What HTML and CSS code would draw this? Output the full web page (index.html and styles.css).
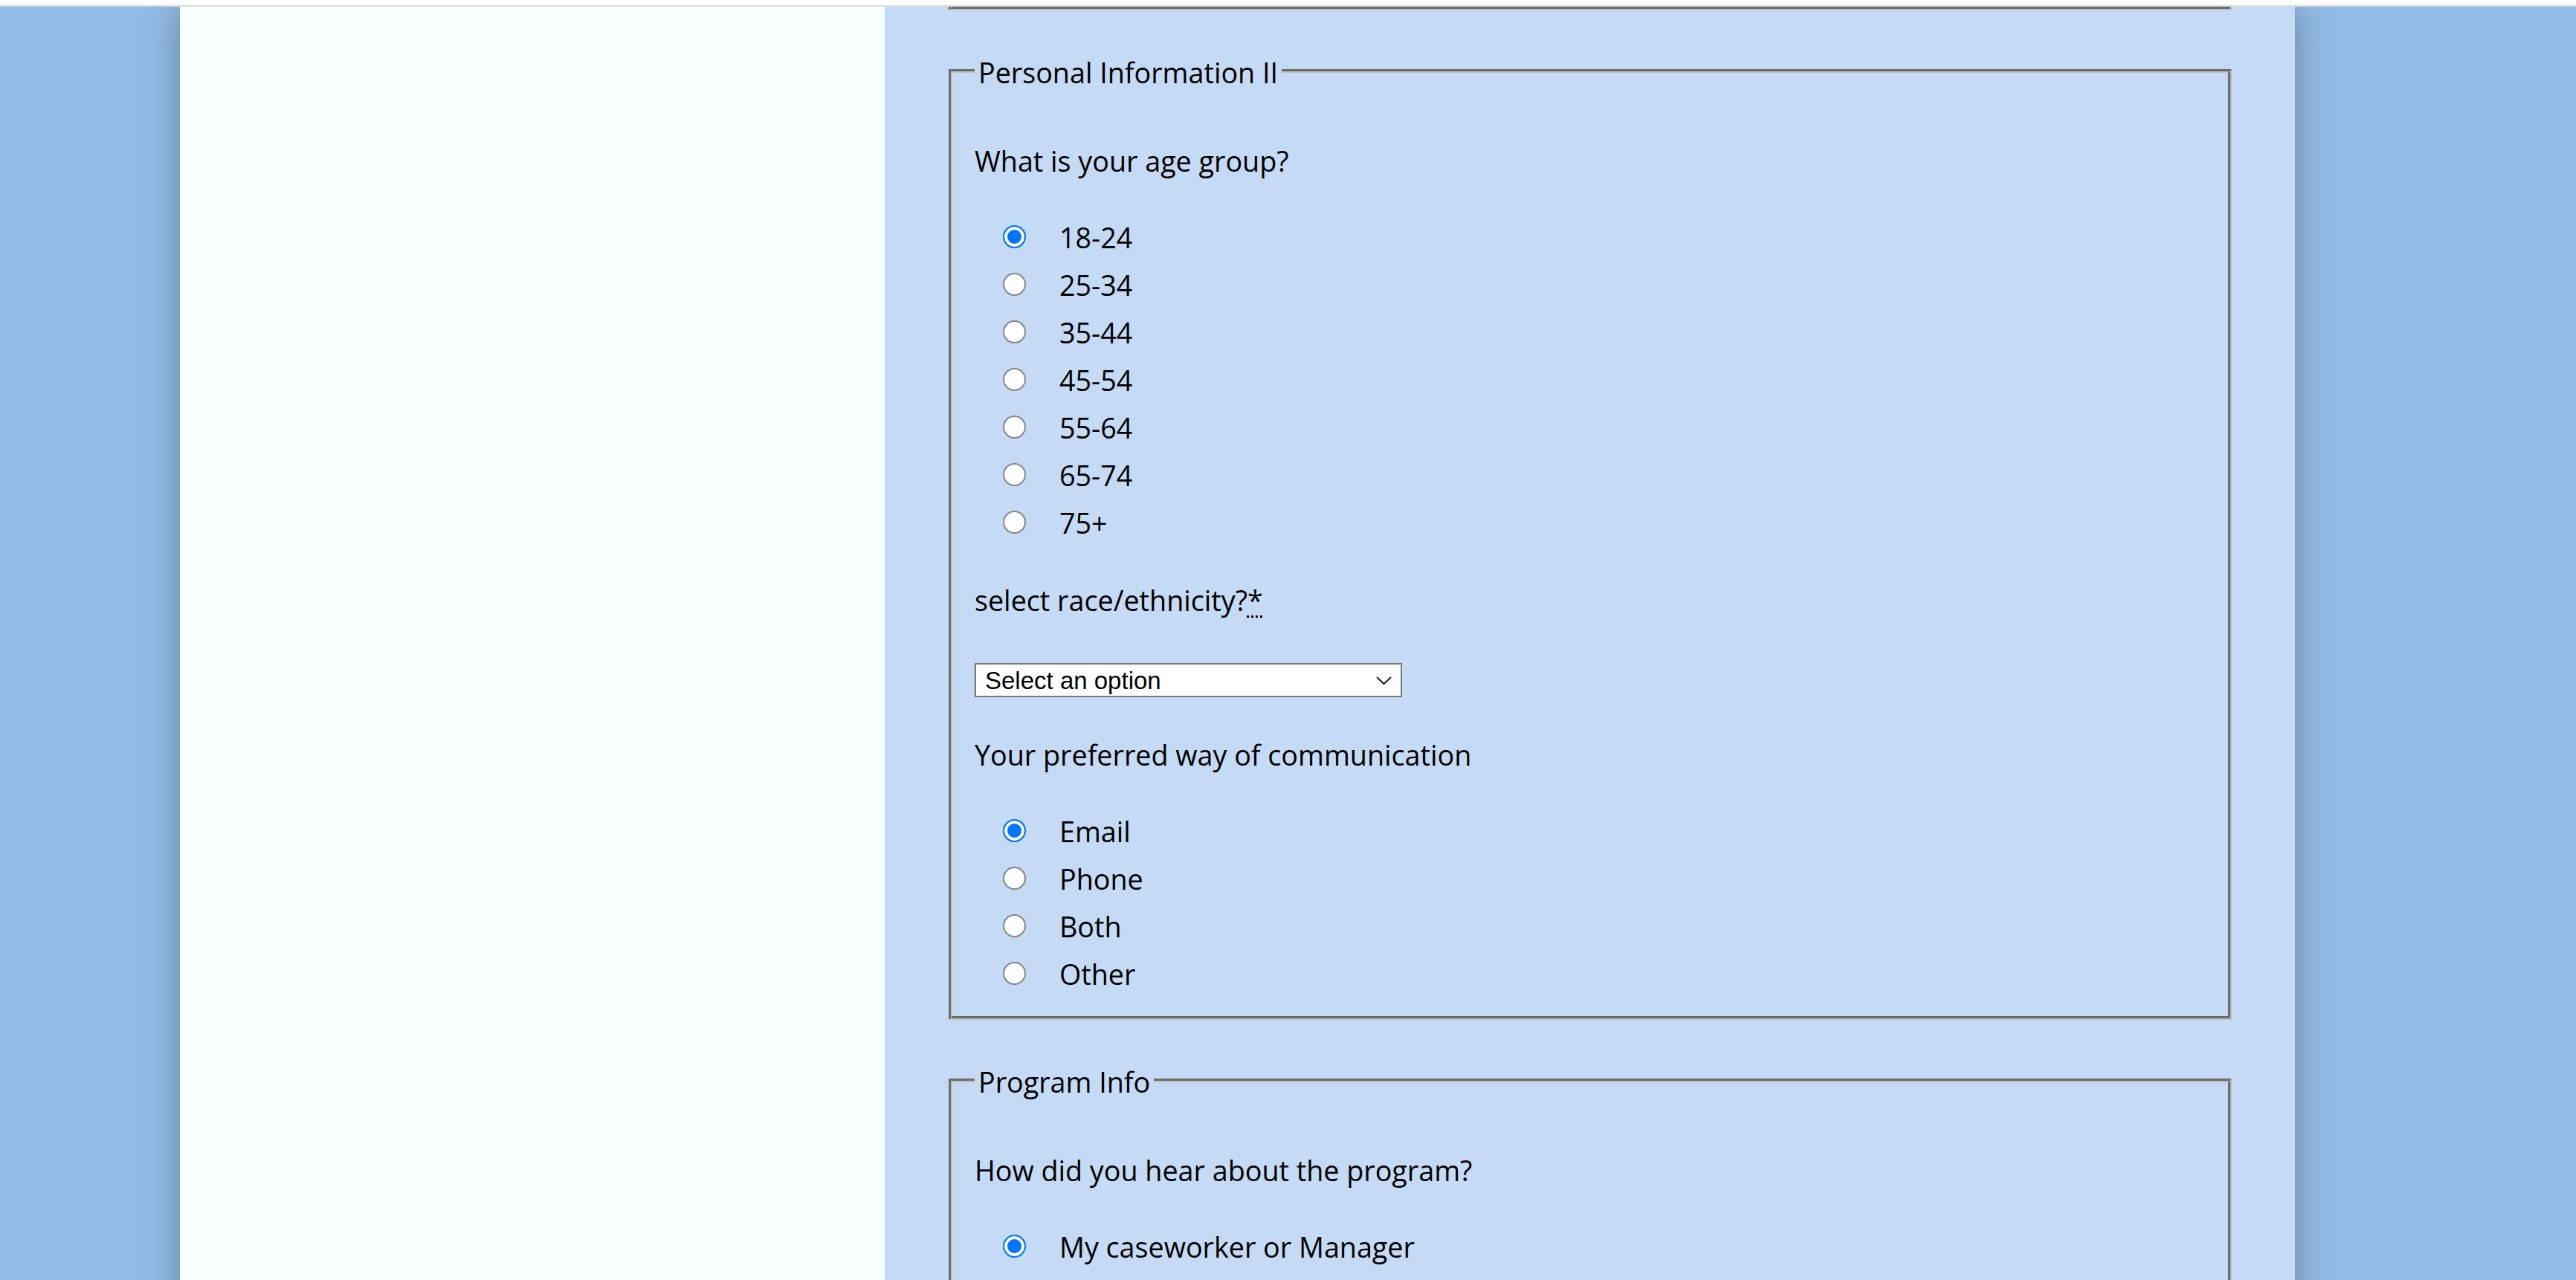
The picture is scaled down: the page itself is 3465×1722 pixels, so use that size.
FILE: index.html
```html
<!DOCTYPE html>
<html lang="en">
<head>
<meta charset="utf-8">
<title>Application Form</title>
<link rel="stylesheet" href="styles.css">
</head>
<body>
<div class="topbar"></div>
<div class="page">
  <aside class="side"></aside>
  <main class="form-col">
    <div class="fieldset-tail"></div>

    <fieldset class="group">
      <legend>Personal Information II</legend>
      <p class="question">What is your age group?</p>
      <div class="options">
        <label class="option"><input type="radio" name="age" checked><span>18-24</span></label>
        <label class="option"><input type="radio" name="age"><span>25-34</span></label>
        <label class="option"><input type="radio" name="age"><span>35-44</span></label>
        <label class="option"><input type="radio" name="age"><span>45-54</span></label>
        <label class="option"><input type="radio" name="age"><span>55-64</span></label>
        <label class="option"><input type="radio" name="age"><span>65-74</span></label>
        <label class="option"><input type="radio" name="age"><span>75+</span></label>
      </div>

      <p class="question">select race/ethnicity?<abbr title="required">*</abbr></p>
      <div class="select-wrap">
        <select class="select"><option>Select an option</option></select>
        <svg class="chevron" viewBox="0 0 21 11" width="21" height="11" aria-hidden="true"><path d="M1 1 L10.5 10 L20 1"/></svg>
      </div>

      <p class="question question-after-select">Your preferred way of communication</p>
      <div class="options">
        <label class="option"><input type="radio" name="comm" checked><span>Email</span></label>
        <label class="option"><input type="radio" name="comm"><span>Phone</span></label>
        <label class="option"><input type="radio" name="comm"><span>Both</span></label>
        <label class="option"><input type="radio" name="comm"><span>Other</span></label>
      </div>
    </fieldset>

    <fieldset class="group group-last">
      <legend>Program Info</legend>
      <p class="question">How did you hear about the program?</p>
      <div class="options">
        <label class="option"><input type="radio" name="hear" checked><span>My caseworker or Manager</span></label>
      </div>
    </fieldset>
  </main>
</div>
</body>
</html>
```

FILE: styles.css
```css
html {
  overflow: hidden;
}

body {
  margin: 0;
  overflow: hidden;
  background: #92bce6;
  color: #000;
  font-family: "Open Sans", "Noto Sans", sans-serif;
  font-size: 37.7px;
  line-height: 57px;
}

.topbar {
  position: relative;
  z-index: 1;
  height: 7px;
  background: #ffffff;
  border-bottom: 2px solid #dcdcdc;
}

.page {
  display: grid;
  grid-template-columns: 948px 1897px;
  width: 2845px;
  margin-left: 242px;
  min-height: calc(100vh - 9px);
  box-shadow: 0 0 45px rgba(0, 0, 0, 0.32);
}

.side {
  background: #f8fefe;
}

.form-col {
  background: #c5daf4;
  padding: 0 85px 0 86px;
}

.fieldset-tail {
  height: 0;
  border: 5px groove #c0c0c0;
  border-top: 0;
}

.group {
  margin: 53px 0 0;
  padding: 0 30px 26px;
  border: 5px groove #c0c0c0;
  min-width: 0;
}

.group-last {
  padding-bottom: 300px;
}

.group legend {
  padding: 4px 5px 0;
  line-height: 53px;
}

.question {
  margin: 45px 0 0;
}

.group > .question:first-of-type {
  margin-top: 64px;
}

.question-after-select {
  margin-top: 49px !important;
}

.question abbr {
  text-decoration: underline dotted;
  text-underline-offset: 6px;
  text-decoration-thickness: 3px;
}

.options {
  margin-top: 41px;
}

.option {
  display: flex;
  align-items: center;
  height: 64px;
  line-height: 64px;
}

.option span {
  padding-top: 4px;
}

.option input {
  appearance: none;
  -webkit-appearance: none;
  flex: none;
  width: 31px;
  height: 31px;
  margin: 0 45px 0 38px;
  border: 2px solid #858585;
  border-radius: 50%;
  background: #ffffff;
}

.option input:checked {
  border-color: #0075ff;
  background: #0075ff;
  box-shadow: inset 0 0 0 4px #ffffff;
}

.select-wrap {
  position: relative;
  width: 575px;
  height: 46px;
  margin-top: 56px;
}

.select {
  appearance: none;
  -webkit-appearance: none;
  display: block;
  width: 100%;
  height: 100%;
  margin: 0;
  padding: 0 0 0 12px;
  border: 2px solid #767676;
  border-radius: 0;
  background: #ffffff;
  color: #000;
  font-family: "Liberation Sans", Arial, sans-serif;
  font-size: 33px;
}

.chevron {
  position: absolute;
  top: 18px;
  right: 14px;
  fill: none;
  stroke: #1a1a1a;
  stroke-width: 2;
  pointer-events: none;
}
```
